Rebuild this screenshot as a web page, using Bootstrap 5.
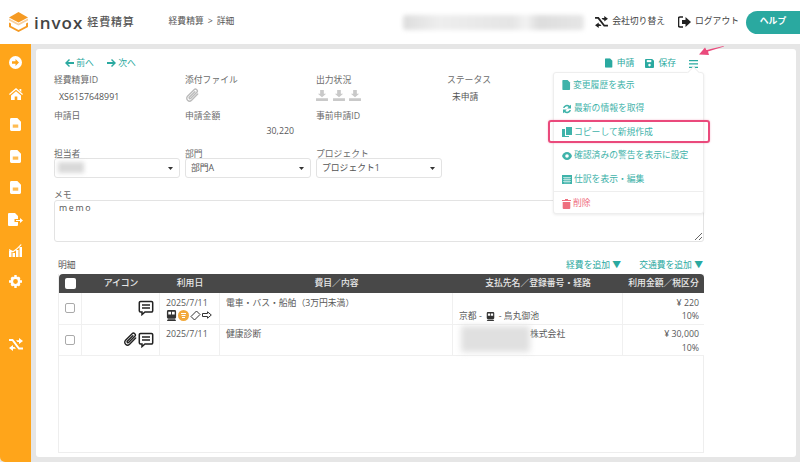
<!DOCTYPE html>
<html lang="ja">
<head>
<meta charset="utf-8">
<title>invox 経費精算</title>
<link href="https://cdn.jsdelivr.net/npm/bootstrap@5.3.0/dist/css/bootstrap.min.css" rel="stylesheet">
<style>
html,body{height:100%;overflow:hidden}
body{font-family:"Open Sans","Noto Sans CJK JP",sans-serif;font-size:8.8px;color:#595959;background:#e6e6e6;line-height:1.3;position:relative}
svg{display:block;flex:none}
.top-bar{height:44px;background:#fff;padding-left:9px}
.logo-word{font-size:17px;font-weight:600;letter-spacing:1px;color:#444;margin-left:6px;line-height:1}
.logo-sub{font-size:11px;font-weight:500;letter-spacing:.8px;color:#555;margin-left:4px;white-space:nowrap}
.crumb{margin-left:34px;color:#555;width:69px;gap:4px;flex:none}
.top-blur{width:181px;height:15px;margin-left:165px;border-radius:3px;background:linear-gradient(90deg,#ddd,#eee 20%,#e5e5e5 60%,#f2f2f2 68%,#ddd 75%,#e6e6e6);filter:blur(2px);flex:none}
.top-link{color:#444}
.logout-link{margin:0 7px 0 13px}
.help-btn{width:54px;height:23px;border-radius:12px 0 0 12px;background:#2aa9a0;color:#fff;font-weight:700;font-size:8.8px;border:0;padding:0;flex:none}
.body-wrap{height:418px}
.side-bar{width:31px;background:#ffa51a;color:#fff;padding-top:2.500px;border-bottom-left-radius:5px;flex:none}
.side-bar .sico{height:31.4px}
.side-bar .sgap{height:31px}
.main-wrap{padding:5px;background:#e6e6e6}
.sheet{background:#fff;border-radius:3px;height:408px;padding:8px 18px 4px 18px;position:relative;width:760px}
.teal{color:#2aa9a0}
.nav-line{height:13px;padding-left:11px;gap:11px;width:644px}
.prev-link{margin-right:2px}
.burger{margin-left:2px}
.grid-line{display:grid;grid-template-columns:repeat(4,131px)}
.fld-lab{color:#6b6b6b;height:14px;line-height:14px}
.r1{margin-top:3px}
.fld-val{height:22px;padding:4.500px 5px 0 5px;color:#555}
.clip-val{padding:1px 0 0;color:#bbb}
.dl-val{padding:3px 0 0;gap:4.500px}
.r2-val{height:23px;position:relative}
.amount{position:absolute;right:22px;top:2.500px}
.sel-line{display:grid;grid-template-columns:repeat(3,131px);padding-top:1px}
.sel-line .fld-lab{margin-bottom:-3px}
.pick{height:20px;width:126px;font-size:8.8px;padding:0 5px;border:1px solid #e3e3e3;border-radius:3px;color:#555;line-height:18px;box-shadow:none;background-size:5px 3px;background-position:right 6px center;background-image:url("data:image/svg+xml,%3Csvg xmlns='http://www.w3.org/2000/svg' viewBox='0 0 7 4'%3E%3Cpath d='M0 0h7L3.500 4z' fill='%23333'/%3E%3C/svg%3E")}
.blur-name{position:absolute;left:4px;top:4px;width:26px;height:11px;background:#d9d9d9;filter:blur(2px)}
.memo-lab{margin-top:9px;margin-bottom:-1px;padding-top:1px;height:14px}
.memo{display:block;height:42px;width:650px;font-size:8.8px;letter-spacing:1.700px;padding:0 4px;line-height:14px;border:1px solid #e3e3e3;border-radius:3px;color:#555;min-height:0;box-shadow:none}
.meisai{margin-top:15px;padding:0 1px 0 4px;height:17px;width:650px}
.add-links{gap:18px}
.tbl-box{margin-left:4px;width:646px;height:179px;border:1px solid #eee;border-top:0}
.line-table{table-layout:fixed;width:645px;margin:0;font-size:8.8px;color:#595959;border-collapse:separate;border-spacing:0}
.line-table th{background:#484848;color:#e9e9e9;font-weight:500;height:19px;padding:0 2px;border:0;text-align:center;vertical-align:middle;line-height:1;white-space:nowrap}
.line-table th:first-child{border-top-left-radius:4px}
.line-table th:last-child{border-top-right-radius:4px}
.line-table td{height:31px;padding:3.500px 6px 0;border:0;border-bottom:1px solid #f0f0f0;border-right:1px solid #f0f0f0;vertical-align:top;line-height:13.500px;color:#595959;background:#fff}
.line-table td:last-child{border-right:0;text-align:right;padding-right:5px}
.line-table td.cc{vertical-align:middle;padding:0;text-align:center}
.chk{width:10px;height:10px;margin:0 auto;display:block;border:1px solid #aaa;border-radius:2px;background:#fff;appearance:none}
th .chk{border:0;width:11px;height:11px}
.mini{gap:1px;height:12px;margin-top:-1px}
.ic-cell{padding-right:5px}
.pay-blur{position:absolute;left:8px;top:1px;width:69px;height:26px;background:#e0e0e0;filter:blur(3px)}
.pay-name{padding-left:71px}
.drop-menu{position:absolute;left:553px;top:72px;width:151px;height:142px;background:#fff;border:1px solid #eee;border-radius:3px;box-shadow:0 1px 3px rgba(0,0,0,.08);padding:.500px 0 0;z-index:3}
.drop-row{height:23.500px;padding-left:8px;gap:2px;color:#3fb3aa;font-size:8.8px}
.drop-del{color:#ef6f7f;border-top:1px solid #eee;height:24px}
.hl-box{position:absolute;left:548px;top:120px;width:162px;height:23px;border:2px solid #ea4a7c;border-radius:3px;z-index:5;box-shadow:0 0 2px rgba(234,74,124,.4)}
.pink-arrow{position:absolute;left:698px;top:46px;z-index:5}
.notch{position:absolute;left:689px;top:68px;width:9px;height:9px;background:#fff;border-left:1px solid #eee;border-top:1px solid #eee;transform:rotate(45deg);z-index:4}
</style>
</head>
<body>
<svg width="0" height="0" style="position:absolute">
<defs>
<symbol id="doc" viewBox="0 0 12 14"><path d="M1.500 0H8l4 4v8.500a1.500 1.500 0 0 1-1.500 1.500h-9A1.500 1.500 0 0 1 0 12.500v-11A1.500 1.500 0 0 1 1.500 0z" fill="currentColor"/><path d="M3 7h6v3.500H3z" fill="#ffa51a" opacity=".75"/></symbol>
<symbol id="pdoc" viewBox="0 0 12 14"><path d="M1 0h6.500L11 3.500V13a1 1 0 0 1-1 1H1a1 1 0 0 1-1-1V1a1 1 0 0 1 1-1z" fill="currentColor"/></symbol>
<symbol id="clip" viewBox="0 0 16 16"><path d="M13.500 6.500 7 13a3 3 0 0 1-4.300-4.200l7-7a2 2 0 0 1 2.900 2.800L6 11.200a1 1 0 0 1-1.400-1.400L10.500 4" fill="none" stroke="currentColor" stroke-width="1.500" stroke-linecap="round"/></symbol>
<symbol id="memo" viewBox="0 0 16 16"><path d="M2.500 1.500h11a1.200 1.200 0 0 1 1.200 1.200v8.100a1.200 1.200 0 0 1-1.200 1.200H7l-3 2.600v-2.600H2.500a1.200 1.200 0 0 1-1.200-1.200V2.700a1.200 1.200 0 0 1 1.200-1.200z" fill="none" stroke="#222" stroke-width="1.500"/><path d="M4 5h8M4 8h8" stroke="#222" stroke-width="1.300"/></symbol>
<symbol id="train" viewBox="0 0 12 12"><path d="M2.500 0h7A1.500 1.500 0 0 1 11 1.500V8a1.500 1.500 0 0 1-1.500 1.500h-7A1.500 1.500 0 0 1 1 8V1.500A1.500 1.500 0 0 1 2.500 0zM2 10.200h8L11 12H1z" fill="#333"/><path d="M2.500 2h3v3h-3zM6.500 2h3v3h-3z" fill="#fff"/></symbol>
<symbol id="dl" viewBox="0 0 13 12"><path d="M4.500 0h4v4H11L6.500 8 2 4h2.500zM0 9h13v3H0z" fill="#c9c9c9"/></symbol>
<symbol id="swap" viewBox="0 0 14 13"><path d="M0 2h3.500L10 10.500h4" fill="none" stroke="currentColor" stroke-width="2"/><path d="M7 2.200h3V0l4 3-4 3V4H8.500zM7 10.800H4V13L0 10l4-3v2h1.500z" fill="currentColor"/></symbol>
</defs>
</svg>

<header class="top-bar d-flex align-items-center">
  <svg width="19" height="20" viewBox="0 0 19 20"><path d="M9.500 0 19 5.500 9.500 10.500 0 5.500z" fill="#f59a23"/><path d="M0 6.500l9.500 5 9.500-5v2l-9.500 5-9.500-5z" fill="#f8cf9d"/><path d="M0 10.500l2 1v2.500l7.500 4 7.500-4v-2.500l2-1v4.500l-9.500 5L0 15z" fill="#f59a23"/></svg>
  <span class="logo-word">invox</span><span class="logo-sub">経費精算</span>
  <span class="crumb d-flex align-items-center text-nowrap">経費精算 <span>&gt;</span> 詳細</span>
  <div class="top-blur"></div>
  <div class="d-flex align-items-center ms-auto gap-1 top-link text-nowrap"><svg width="13" height="12" style="color:#222"><use href="#swap"/></svg>会社切り替え</div>
  <div class="d-flex align-items-center gap-1 top-link text-nowrap logout-link"><svg width="13" height="12" viewBox="0 0 13 12"><path d="M5 1H2a1.500 1.500 0 0 0-1.500 1.500v7A1.500 1.500 0 0 0 2 11h3" fill="none" stroke="#222" stroke-width="1.600"/><path d="M7.500 1 13 6l-5.500 5V8H4V4h3.500z" fill="#222"/></svg>ログアウト</div>
  <button class="help-btn">ヘルプ</button>
</header>

<div class="body-wrap d-flex">
  <nav class="side-bar d-flex flex-column align-items-center">
    <div class="sico d-flex align-items-center"><svg width="13" height="13" viewBox="0 0 13 13"><circle cx="6.500" cy="6.500" r="6.500" fill="#fff"/><path d="M6.500 3 10 6.500 6.500 10V7.700H3V5.300h3.500z" fill="#ffa51a"/></svg></div>
    <div class="sico d-flex align-items-center"><svg width="14" height="12" viewBox="0 0 14 12"><path d="M7 0 14 6l-.8 1L7 1.800.8 7 0 6zM2 7.500 7 3.200l5 4.300V12H8.300V8.500H5.700V12H2zM10.500 1h1.800v3l-1.800-1.500z" fill="#fff"/></svg></div>
    <div class="sico d-flex align-items-center text-white"><svg width="11" height="13"><use href="#doc"/></svg></div>
    <div class="sico d-flex align-items-center text-white"><svg width="11" height="13"><use href="#doc"/></svg></div>
    <div class="sico d-flex align-items-center text-white"><svg width="11" height="13"><use href="#doc"/></svg></div>
    <div class="sico d-flex align-items-center"><svg width="15" height="13" viewBox="0 0 15 13"><path d="M1 0h6l3 3v3H6.500v3H10v3a1 1 0 0 1-1 1H1a1 1 0 0 1-1-1V1a1 1 0 0 1 1-1z" fill="#fff"/><path d="M8 7h4V5l3 2.500L12 10V8H8z" fill="#fff"/></svg></div>
    <div class="sico d-flex align-items-center"><svg width="13" height="13" viewBox="0 0 13 13"><path d="M0 7h2.500v6H0zM3.500 9H6v4H3.500zM7 6h2.500v7H7zM10.500 3H13v10h-2.500zM0 5l4 2 4-3 4-4 .5 1L8 5.500 4 8.500 0 6.500z" fill="#fff"/></svg></div>
    <div class="sico d-flex align-items-center"><svg width="13" height="13" viewBox="0 0 13 13"><circle cx="6.500" cy="6.500" r="3.700" fill="none" stroke="#fff" stroke-width="2.600"/><path d="M5.300 0h2.400v2.500H5.300zM5.300 10.500h2.400V13H5.300zM0 5.300h2.500v2.400H0zM10.500 5.300H13v2.400h-2.500zM1.500 3.200 3.200 1.500 5 3.300 3.300 5zM8 9.700 9.700 8l1.800 1.800-1.700 1.700zM1.500 9.800 3.300 8 5 9.700l-1.800 1.800zM8 3.300 9.800 1.500l1.700 1.700L9.700 5z" fill="#fff"/></svg></div>
    <div class="sgap"></div>
    <div class="sico d-flex align-items-center text-white"><svg width="14" height="13"><use href="#swap"/></svg></div>
  </nav>
  <div class="main-wrap flex-grow-1">
    <main class="sheet">
      <div class="nav-line d-flex align-items-center teal">
        <span class="d-flex align-items-center text-nowrap prev-link"><svg width="9" height="8" viewBox="0 0 9 8"><path d="M4 0 0 4l4 4 1-1-2-2h6V3H3l2-2z" fill="currentColor"/></svg>&nbsp;前へ</span>
        <span class="d-flex align-items-center text-nowrap"><svg width="9" height="8" viewBox="0 0 9 8"><path d="M5 0l4 4-4 4-1-1 2-2H0V3h6L4 1z" fill="currentColor"/></svg>&nbsp;次へ</span>
        <span class="ms-auto d-flex align-items-center text-nowrap gap-1"><svg width="8" height="10" viewBox="0 0 12 14"><use href="#pdoc"/></svg>申請</span>
        <span class="d-flex align-items-center text-nowrap gap-1"><svg width="9" height="9" viewBox="0 0 10 10"><path d="M1 0h7l2 2v7a1 1 0 0 1-1 1H1a1 1 0 0 1-1-1V1a1 1 0 0 1 1-1z" fill="currentColor"/><path d="M2 1.200h5v2.300H2z" fill="#fff"/><circle cx="5" cy="6.800" r="1.400" fill="#fff"/></svg>保存</span>
        <span class="burger"><svg width="9" height="8" viewBox="0 0 9 8"><path d="M0 0h9v1.300H0zM0 3.300h9v1.300H0zM0 6.700h9V8H0z" fill="currentColor"/></svg></span>
      </div>

      <div class="grid-line r1">
        <div><div class="fld-lab">経費精算ID</div><div class="fld-val">XS6157648991</div></div>
        <div><div class="fld-lab">添付ファイル</div><div class="fld-val clip-val"><svg width="15" height="15"><use href="#clip"/></svg></div></div>
        <div><div class="fld-lab">出力状況</div><div class="fld-val dl-val d-flex"><svg width="12" height="11"><use href="#dl"/></svg><svg width="12" height="11"><use href="#dl"/></svg><svg width="12" height="11"><use href="#dl"/></svg></div></div>
        <div><div class="fld-lab">ステータス</div><div class="fld-val">未申請</div></div>
      </div>
      <div class="grid-line">
        <div><div class="fld-lab">申請日</div><div class="r2-val"></div></div>
        <div><div class="fld-lab">申請金額</div><div class="r2-val"><span class="amount">30,220</span></div></div>
        <div><div class="fld-lab">事前申請ID</div><div class="r2-val"></div></div>
        <div></div>
      </div>
      <div class="sel-line">
        <div><div class="fld-lab">担当者</div><div class="position-relative"><select class="form-select pick"><option></option></select><span class="blur-name"></span></div></div>
        <div><div class="fld-lab">部門</div><select class="form-select pick"><option>部門A</option></select></div>
        <div><div class="fld-lab">プロジェクト</div><select class="form-select pick"><option>プロジェクト1</option></select></div>
      </div>
      <div class="fld-lab memo-lab">メモ</div>
      <textarea class="form-control memo">memo</textarea>

      <div class="meisai d-flex align-items-center">
        <span>明細</span>
        <span class="ms-auto d-flex add-links teal text-nowrap"><span>経費を追加 ▼</span><span>交通費を追加 ▼</span></span>
      </div>
      <div class="tbl-box">
        <table class="table line-table">
          <colgroup><col style="width:23px"><col style="width:78px"><col style="width:60px"><col style="width:233px"><col style="width:170px"><col style="width:81px"></colgroup>
          <thead><tr>
            <th><input type="checkbox" class="chk"></th><th>アイコン</th><th>利用日</th><th>費目／内容</th><th>支払先名／登録番号・経路</th><th>利用金額／税区分</th>
          </tr></thead>
          <tbody>
            <tr>
              <td class="cc"><input type="checkbox" class="chk"></td>
              <td class="cc"><div class="d-flex justify-content-end ic-cell"><svg width="16" height="16"><use href="#memo"/></svg></div></td>
              <td><div>2025/7/11</div><div class="d-flex mini align-items-center"><svg width="11" height="11"><use href="#train"/></svg><svg width="11" height="11" viewBox="0 0 11 11"><circle cx="5.500" cy="5.500" r="5.500" fill="#f2a93b"/><path d="M3 3h5v1H3zM3.500 5h4v1h-4zM4 7h3v1H4z" fill="#fff"/></svg><svg width="11" height="11" viewBox="0 0 11 11"><path d="M6.500 1 10 4.500 4.500 10 1 6.500z" fill="none" stroke="#333"/></svg><svg width="10" height="8" viewBox="0 0 10 8"><path d="M.5 2.500h5V.8L9.300 4 5.500 7.200V5.500h-5z" fill="none" stroke="#333"/></svg></div></td>
              <td>電車・バス・船舶（3万円未満）</td>
              <td><div>&nbsp;</div><div class="d-flex align-items-center gap-1">京都 - <svg width="9" height="9"><use href="#train"/></svg> - 烏丸御池</div></td>
              <td><div>¥ 220</div><div>10%</div></td>
            </tr>
            <tr>
              <td class="cc"><input type="checkbox" class="chk"></td>
              <td class="cc"><div class="d-flex justify-content-end ic-cell"><svg width="15" height="15" style="color:#222"><use href="#clip"/></svg><svg width="16" height="16"><use href="#memo"/></svg></div></td>
              <td>2025/7/11</td>
              <td>健康診断</td>
              <td class="position-relative"><span class="pay-blur"></span><span class="pay-name">株式会社</span></td>
              <td><div>¥ 30,000</div><div>10%</div></td>
            </tr>
          </tbody>
        </table>
      </div>
    </main>
  </div>
</div>

<div class="notch"></div>
<div class="drop-menu">
  <div class="drop-row d-flex align-items-center"><svg width="9" height="10" viewBox="0 0 12 14"><use href="#pdoc"/></svg>変更履歴を表示</div>
  <div class="drop-row d-flex align-items-center"><svg width="10" height="10" viewBox="0 0 10 10"><path d="M1 4a4 4 0 0 1 6.700-2.200L9 .7V4.500H5.200l1.400-1.400A2.500 2.500 0 0 0 2.500 4zM9 6a4 4 0 0 1-6.700 2.200L1 9.300V5.500h3.800L3.400 6.900A2.500 2.500 0 0 0 7.500 6z" fill="currentColor"/></svg>最新の情報を取得</div>
  <div class="drop-row d-flex align-items-center"><svg width="10" height="10" viewBox="0 0 10 10"><path d="M4 0h6v8H4zM0 2h3v7h4v1H0z" fill="currentColor"/></svg>コピーして新規作成</div>
  <div class="drop-row d-flex align-items-center"><svg width="10" height="8" viewBox="0 0 10 8"><path d="M5 0c2.500 0 4.200 2 5 4-.8 2-2.500 4-5 4S.8 6 0 4c.8-2 2.500-4 5-4z" fill="currentColor"/><circle cx="5" cy="4" r="1.800" fill="#fff"/></svg>確認済みの警告を表示に設定</div>
  <div class="drop-row d-flex align-items-center"><svg width="10" height="9" viewBox="0 0 10 9"><path d="M0 0h10v9H0z" fill="currentColor"/><path d="M1 2.500h8M1 4.500h8M1 6.500h8M3 2v6.500M5 2v6.500M7 2v6.500" stroke="#fff" stroke-width=".5"/></svg>仕訳を表示・編集</div>
  <div class="drop-row drop-del d-flex align-items-center"><svg width="9" height="10" viewBox="0 0 9 10"><path d="M3 0h3v1h3v1H0V1h3zM.7 3h7.600v6a1 1 0 0 1-1 1H1.700a1 1 0 0 1-1-1z" fill="currentColor"/></svg>削除</div>
</div>
<div class="hl-box"></div>
<svg class="pink-arrow" width="28" height="12" viewBox="0 0 28 12"><path d="M26 .5 10 5.500 11 9 1 8.500 7 1.500 8.500 4 25.500 0z" fill="#ea4a7c"/></svg>
<script src="https://cdn.jsdelivr.net/npm/bootstrap@5.3.0/dist/js/bootstrap.bundle.min.js"></script>
</body>
</html>
